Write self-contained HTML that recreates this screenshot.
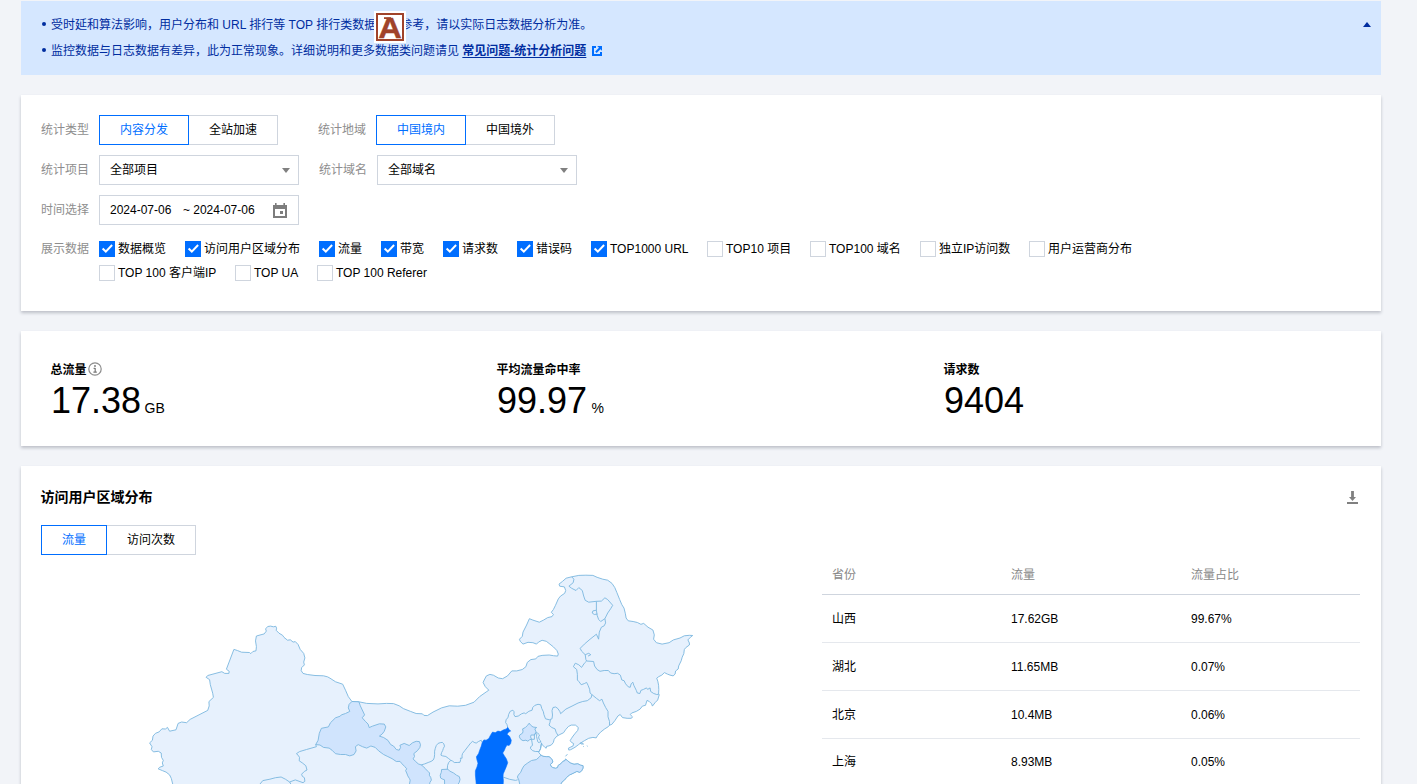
<!DOCTYPE html>
<html lang="zh-CN">
<head>
<meta charset="utf-8">
<title>统计分析</title>
<style>
*{box-sizing:border-box;margin:0;padding:0}
html,body{width:1417px;height:784px;overflow:hidden}
body{background:#f2f4f8;font-family:"Liberation Sans","Noto Sans CJK SC",sans-serif;font-size:12px;color:#000;position:relative;line-height:18px}
.abs{position:absolute}
.alert{left:21px;top:1px;width:1360px;height:74px;background:#d5e7ff;color:#002da0}
.alert .li{position:absolute;left:30px;white-space:nowrap;height:18px;line-height:18px}
.alert .dot{position:absolute;left:20.8px;width:4.4px;height:4.4px;border-radius:50%;background:#002da0}
.alert a{color:#002da0;font-weight:bold;text-decoration:underline;text-decoration-thickness:1px;text-underline-offset:2px}
.card{left:21px;width:1360px;background:#fff;box-shadow:0 2px 3px 0 rgba(54,58,80,.28)}
.lbl{color:#8e8e8e;white-space:nowrap;height:18px;line-height:18px}
.seg{height:30px;line-height:28px;text-align:center;border:1px solid #cfd5de;background:#fff;color:#000;white-space:nowrap}
.seg.on{border-color:#006eff;color:#006eff;z-index:2}
.sel{height:30px;border:1px solid #cfd5de;background:#fff;line-height:28px;padding-left:10px;white-space:nowrap}
.sel .car{position:absolute;right:8px;top:12px;width:0;height:0;border-left:4px solid transparent;border-right:4px solid transparent;border-top:5px solid #808080}
.cb{width:16px;height:16px;border:1px solid #cfd5de;background:#fff}
.cb.on{border-color:#006eff;background:#006eff}
.cb.on svg{position:absolute;left:-1px;top:-1px}
.ct{white-space:nowrap;height:18px;line-height:18px}
.st-t{font-weight:bold;white-space:nowrap;height:18px;line-height:18px}
.st-n{font-size:36px;line-height:44px;height:44px;white-space:nowrap;color:#000}
.st-n small{font-size:14px;margin-left:3.5px}
.th{color:#888;white-space:nowrap;height:18px;line-height:18px}
.td{white-space:nowrap;height:18px;line-height:18px}
.hr{left:822px;width:538px;height:1px;background:#e5e8ed}
</style>
</head>
<body>

<!-- alert -->
<div class="abs alert">
  <span class="dot" style="top:20.8px"></span>
  <div class="li" style="top:15px">受时延和算法影响，用户分布和 URL 排行等 TOP 排行类数据仅供参考，请以实际日志数据分析为准。</div>
  <span class="dot" style="top:46.8px"></span>
  <div class="li" style="top:41px">监控数据与日志数据有差异，此为正常现象。详细说明和更多数据类问题请见 <a>常见问题-统计分析问题</a></div>
  <svg class="abs" style="left:571px;top:45px" width="10" height="10" viewBox="0 0 10 10"><path d="M0 0h4v2H2v6h6V6h2v4H0z" fill="#006eff"/><path d="M5.2 0H10v4.8L8.4 3.2 4.6 7 3.2 5.6 7 1.8z" fill="#006eff"/></svg>
  <span class="abs" style="left:1342px;top:21px;width:0;height:0;border-left:4px solid transparent;border-right:4px solid transparent;border-bottom:5px solid #002da0"></span>
</div>
<!-- IME badge -->
<svg class="abs" style="left:374px;top:11px;z-index:5" width="32" height="32" viewBox="0 0 32 32"><rect width="32" height="32" fill="#fff"/><rect x="3" y="3" width="26" height="26" fill="none" stroke="#a0432a" stroke-width="2"/><rect x="10" y="6.2" width="7" height="1.8" fill="#a0432a"/><g transform="translate(16,0) scale(1.08,1)"><text x="0" y="27" text-anchor="middle" font-family="Liberation Sans, sans-serif" font-weight="bold" font-size="30.2" fill="#a0432a" stroke="#a0432a" stroke-width="0.4">A</text></g></svg>

<!-- filter card -->
<div class="abs card" style="top:95px;height:216px"></div>
<div class="abs lbl" style="left:41px;top:121px">统计类型</div>
<div class="abs seg on" style="left:99px;top:115px;width:90px">内容分发</div>
<div class="abs seg" style="left:188px;top:115px;width:90px">全站加速</div>
<div class="abs lbl" style="left:318px;top:121px">统计地域</div>
<div class="abs seg on" style="left:376px;top:115px;width:90px">中国境内</div>
<div class="abs seg" style="left:465px;top:115px;width:90px">中国境外</div>

<div class="abs lbl" style="left:41px;top:161px">统计项目</div>
<div class="abs sel" style="left:99px;top:155px;width:200px">全部项目<span class="car"></span></div>
<div class="abs lbl" style="left:319px;top:161px">统计域名</div>
<div class="abs sel" style="left:377px;top:155px;width:200px">全部域名<span class="car"></span></div>

<div class="abs lbl" style="left:41px;top:201px">时间选择</div>
<div class="abs sel" style="left:99px;top:195px;width:200px">2024-07-06<span style="margin-left:11.5px">~ 2024-07-06</span>
  <svg class="abs" style="left:173px;top:7px" width="14" height="15" viewBox="0 0 14 15"><path d="M0 2h14v13H0z" fill="#7d7d7d"/><path d="M2 6h10v7H2z" fill="#fff"/><path d="M2 0h1.6v2H2zM10.4 0H12v2h-1.6z" fill="#7d7d7d"/><rect x="7" y="8" width="3" height="3" fill="#7d7d7d"/></svg>
</div>

<div class="abs lbl" style="left:41px;top:240px">展示数据</div>

<div class="abs cb on" style="left:99px;top:241px"><svg width="16" height="16" viewBox="0 0 16 16"><path d="M3.6 7.6l3.2 3 6.3-6.6" fill="none" stroke="#fff" stroke-width="2"/></svg></div><div class="abs ct" style="left:118px;top:240px">数据概览</div>
<div class="abs cb on" style="left:185px;top:241px"><svg width="16" height="16" viewBox="0 0 16 16"><path d="M3.6 7.6l3.2 3 6.3-6.6" fill="none" stroke="#fff" stroke-width="2"/></svg></div><div class="abs ct" style="left:204px;top:240px">访问用户区域分布</div>
<div class="abs cb on" style="left:319px;top:241px"><svg width="16" height="16" viewBox="0 0 16 16"><path d="M3.6 7.6l3.2 3 6.3-6.6" fill="none" stroke="#fff" stroke-width="2"/></svg></div><div class="abs ct" style="left:338px;top:240px">流量</div>
<div class="abs cb on" style="left:381px;top:241px"><svg width="16" height="16" viewBox="0 0 16 16"><path d="M3.6 7.6l3.2 3 6.3-6.6" fill="none" stroke="#fff" stroke-width="2"/></svg></div><div class="abs ct" style="left:400px;top:240px">带宽</div>
<div class="abs cb on" style="left:443px;top:241px"><svg width="16" height="16" viewBox="0 0 16 16"><path d="M3.6 7.6l3.2 3 6.3-6.6" fill="none" stroke="#fff" stroke-width="2"/></svg></div><div class="abs ct" style="left:462px;top:240px">请求数</div>
<div class="abs cb on" style="left:517px;top:241px"><svg width="16" height="16" viewBox="0 0 16 16"><path d="M3.6 7.6l3.2 3 6.3-6.6" fill="none" stroke="#fff" stroke-width="2"/></svg></div><div class="abs ct" style="left:536px;top:240px">错误码</div>
<div class="abs cb on" style="left:591px;top:241px"><svg width="16" height="16" viewBox="0 0 16 16"><path d="M3.6 7.6l3.2 3 6.3-6.6" fill="none" stroke="#fff" stroke-width="2"/></svg></div><div class="abs ct" style="left:610px;top:240px">TOP1000 URL</div>
<div class="abs cb" style="left:707px;top:241px"></div><div class="abs ct" style="left:726px;top:240px">TOP10 项目</div>
<div class="abs cb" style="left:810px;top:241px"></div><div class="abs ct" style="left:829px;top:240px">TOP100 域名</div>
<div class="abs cb" style="left:920px;top:241px"></div><div class="abs ct" style="left:939px;top:240px">独立IP访问数</div>
<div class="abs cb" style="left:1029px;top:241px"></div><div class="abs ct" style="left:1048px;top:240px">用户运营商分布</div>
<div class="abs cb" style="left:99px;top:265px"></div><div class="abs ct" style="left:118px;top:264px">TOP 100 客户端IP</div>
<div class="abs cb" style="left:235px;top:265px"></div><div class="abs ct" style="left:254px;top:264px">TOP UA</div>
<div class="abs cb" style="left:317px;top:265px"></div><div class="abs ct" style="left:336px;top:264px">TOP 100 Referer</div>

<!-- stats card -->
<div class="abs card" style="top:331px;height:115px"></div>
<div class="abs st-t" style="left:50.5px;top:360.5px">总流量</div>
<svg class="abs" style="left:88px;top:362px" width="14" height="14" viewBox="0 0 14 14"><circle cx="7" cy="7" r="6.2" fill="none" stroke="#8c8c8c" stroke-width="1.2"/><path d="M7.2 6v4.2M5.6 6.4H7.2M5.4 10.2h3.4" stroke="#777" stroke-width="1.2" fill="none"/><circle cx="7" cy="4" r=".9" fill="#777"/></svg>
<div class="abs st-n" style="left:51px;top:378.7px">17.38<small>GB</small></div>
<div class="abs st-t" style="left:496.5px;top:360.5px">平均流量命中率</div>
<div class="abs st-n" style="left:497px;top:378.7px">99.97<small style="margin-left:4.5px">%</small></div>
<div class="abs st-t" style="left:943.5px;top:360.5px">请求数</div>
<div class="abs st-n" style="left:944px;top:378.7px">9404</div>

<!-- chart card -->
<div class="abs card" style="top:466px;height:340px"></div>
<div class="abs" style="left:40.5px;top:486.5px;font-size:14px;font-weight:bold;line-height:20px;white-space:nowrap">访问用户区域分布</div>
<svg class="abs" style="left:1347px;top:491px" width="11" height="13" viewBox="0 0 11 13"><path d="M4.1 0h2.8v6.1H9L5.5 10 2 6.1h2.1z" fill="#808080"/><rect x="0" y="11" width="11" height="2" fill="#808080"/></svg>
<div class="abs seg on" style="left:41px;top:525px;width:66px">流量</div>
<div class="abs seg" style="left:106px;top:525px;width:90px">访问次数</div>

<!-- map -->
<svg class="abs" style="left:0;top:560px" width="800" height="224" viewBox="0 560 800 224" fill="none" stroke="#7ab7df" stroke-width="0.9" stroke-linejoin="round">
<path fill="#e7f1fd" d="M173.3 786.9L172.7 784.0L171.3 778.4L169.6 774.9L166.1 772.1L162.6 770.7L158.1 768.8L159.8 767.2L163.3 766.0L162.3 762.9L163.3 760.4L161.5 757.3L161.2 753.0L158.3 751.3L153.4 751.9L151.3 749.5L152.0 746.7L149.6 742.9L152.4 740.3L153.0 736.1L155.5 733.3L159.1 731.9L161.9 728.8L165.4 729.0L167.5 727.4L169.6 731.2L176.0 729.8L178.1 723.4L181.6 722.0L186.6 722.7L190.1 719.4L207.7 710.4L209.2 705.9L208.9 701.6L213.4 697.4L212.7 693.2L210.3 684.7L209.6 679.7L206.1 677.3L207.7 675.5L221.9 671.7L224.7 673.4L228.9 673.4L229.2 671.3L226.4 669.2L233.9 649.4L237.4 650.5L241.6 652.2L249.4 652.5L250.8 653.6L252.9 651.5L256.0 650.8L256.4 646.6L255.5 640.9L256.4 636.0L260.0 635.0L264.2 633.9L266.3 631.1L265.6 628.9L267.7 626.5L270.6 626.1L273.4 626.8L275.8 626.3L276.6 628.2L276.2 630.3L279.0 633.2L282.6 635.3L284.0 637.4L287.5 640.2L290.3 639.8L293.1 642.1L295.3 641.6L298.1 644.5L300.2 649.4L303.7 653.4L304.9 657.9L303.7 662.1L304.4 664.9L301.6 667.7L301.2 670.6L303.0 673.4L307.3 674.5L315.0 675.5L323.5 675.8L327.7 676.9L330.0 678.2L335.6 681.8L342.7 684.2L345.5 690.2L348.3 696.6L351.9 701.5L358.9 701.8L366.7 703.4L378.0 703.9L386.5 703.4L393.5 703.6L399.2 705.8L403.4 708.6L410.5 711.4L416.1 713.5L422.4 713.8L423.9 715.4L427.4 715.6L433.0 712.1L441.5 707.9L449.3 705.8L457.7 706.2L465.5 705.3L474.0 702.2L479.6 696.6L486.7 691.6L488.8 690.2L485.3 686.7L483.1 682.5L484.2 680.0L486.4 675.9L489.9 674.4L493.4 675.2L498.3 678.0L502.6 678.7L507.5 675.9L511.8 670.9L516.7 670.9L522.3 669.5L525.9 666.7L527.3 662.4L530.8 659.6L535.8 658.9L537.9 656.4L542.1 655.4L549.2 655.0L553.4 655.7L557.6 656.1L558.3 654.0L556.9 650.5L553.4 646.9L549.9 644.1L546.3 641.3L542.1 640.3L538.6 642.0L536.5 644.1L532.9 642.7L528.0 642.3L523.0 644.1L520.2 641.3L519.5 639.2L522.3 636.3L523.0 632.1L526.6 625.0L529.4 618.7L532.9 620.1L539.3 622.2L543.5 620.1L547.7 617.6L552.0 616.6L553.4 614.5L551.3 612.3L553.4 609.5L555.5 605.3L558.3 598.9L560.5 596.1L564.7 593.3L565.7 590.5L564.4 586.9L559.7 586.2L559.0 584.1L562.6 581.3L566.1 578.2L571.7 576.8L578.8 575.4L585.9 575.2L592.9 575.4L597.1 577.3L602.8 579.2L607.7 580.2L612.0 583.4L614.8 587.6L616.9 592.6L619.7 599.6L621.8 604.6L624.0 608.1L625.4 613.8L626.1 618.0L628.2 620.8L633.1 621.5L637.4 622.5L640.9 624.3L643.7 623.4L648.0 627.2L652.9 630.0L654.3 634.9L653.6 639.2L656.4 642.7L662.1 644.1L669.1 642.7L673.4 639.9L680.0 638.0L684.3 635.8L689.4 635.3L692.7 635.5L690.4 637.3L687.9 639.9L689.4 643.0L689.4 645.0L685.8 647.6L684.3 649.6L683.8 653.7L682.2 657.2L681.2 660.8L678.7 665.9L678.2 669.0L675.6 671.0L675.1 674.1L673.1 675.9L670.0 675.1L667.4 674.1L664.4 672.6L661.8 675.1L658.8 676.6L656.7 678.2L657.8 681.2L658.6 685.3L658.8 689.4L658.6 694.3L659.3 694.6L657.7 700.0L655.4 702.3L652.4 706.1L651.6 703.8L649.3 701.5L647.0 700.4L645.5 705.3L642.4 706.1L640.1 709.1L636.3 711.4L631.7 713.0L630.2 714.5L632.5 716.8L631.4 718.3L627.1 718.3L622.5 717.6L620.2 714.5L617.9 716.0L614.9 720.6L611.8 724.4L609.5 725.2L608.5 726.5L604.7 728.9L600.5 732.2L597.6 735.5L596.2 737.9L592.9 737.4L588.7 738.3L584.4 740.7L580.6 743.0L578.7 744.5L575.0 747.3L570.7 749.7L568.8 750.1L568.4 748.2L570.2 747.3L573.1 745.9L573.6 743.5L571.7 742.6L570.2 740.7L571.2 738.8L573.1 736.0L575.4 733.1L577.8 730.3L578.3 727.5L575.4 725.1L571.2 725.1L568.4 726.5L565.5 729.8L563.6 732.7L559.9 734.5L558.0 735.5L556.1 736.9L554.2 739.3L553.3 742.6L551.4 744.9L549.0 745.9L546.6 746.3L546.2 748.2L544.8 747.3L542.4 744.9L541.5 743.2L541.0 745.9L540.5 748.7L539.6 750.6L538.6 752.0L539.1 753.0L541.0 755.1L542.9 756.3L546.6 756.7L549.0 756.7L551.4 758.6L552.8 761.0L552.3 762.9L550.4 764.3L550.9 766.2L552.8 767.6L555.6 768.3L557.5 767.6L558.4 765.2L560.8 763.8L562.7 761.5L565.1 760.5L565.5 759.1L567.4 760.5L570.2 762.9L574.0 764.3L577.8 763.8L580.6 765.2L583.0 765.7L583.0 768.1L581.6 770.9L579.7 772.3L576.9 771.4L573.1 773.3L569.3 775.1L566.5 777.5L564.6 779.9L562.2 781.8L560.8 784.0L560.3 788.4Z"/>
<path fill="#d0e4fd" d="M351.9 701.5L358.9 701.8L360.3 705.8L364.6 714.9L362.2 717.8L365.3 721.3L368.1 724.1L369.2 727.6L372.3 726.2L379.4 723.8L384.3 724.1L385.8 726.9L384.3 731.2L382.2 734.0L379.4 736.1L383.6 737.5L387.9 740.3L390.7 744.6L393.5 746.0L396.3 749.5L399.2 750.2L400.6 747.4L399.9 745.3L404.2 743.4L409.2 745.5L412.7 742.7L416.2 741.3L419.4 741.6L420.5 744.8L419.8 747.6L417.3 750.8L413.8 753.6L414.5 756.5L413.1 758.9L415.2 761.1L418.3 763.9L421.2 764.9L423.6 766.7L425.4 768.8L428.2 771.6L429.6 773.0L429.3 775.2L430.7 777.3L431.4 780.1L430.0 782.2L429.6 784.0L429.5 800.6L409.2 800.6L409.5 784.0L410.2 780.1L409.5 778.7L407.8 775.9L406.7 773.0L405.6 770.6L406.7 768.8L404.9 766.7L402.1 763.9L400.0 761.4L396.3 761.5L392.1 758.7L387.9 756.6L383.6 754.5L378.7 750.9L375.2 747.4L370.9 746.0L366.7 748.1L362.5 746.7L358.2 744.6L355.4 746.7L356.1 750.9L354.0 754.5L349.8 755.9L345.5 754.5L340.6 754.5L335.5 753.7L332.0 750.2L329.1 748.1L323.5 747.4L320.0 745.0L315.7 744.6L318.1 740.3L319.3 733.3L321.4 728.3L328.4 726.9L330.5 722.7L335.5 717.8L340.2 716.2L341.3 714.9L345.5 713.5L349.8 711.4L348.3 707.9L349.1 704.3Z"/>
<path fill="#d0e4fd" d="M441.6 769.5L448.0 769.2L449.4 770.9L453.6 773.0L456.5 775.2L459.3 776.6L460.0 779.4L459.3 782.2L458.2 784.0L457.9 800.6L444.6 800.6L444.6 784.0L444.5 779.8L442.3 779.0L440.6 778.0L440.2 775.2L441.3 772.3Z"/>
<path fill="#d0e4fd" d="M541.0 755.1L542.9 756.3L546.6 756.7L549.0 756.7L551.4 758.6L552.8 761.0L552.3 762.9L550.4 764.3L550.9 766.2L552.8 767.6L555.6 768.3L557.5 767.6L558.4 765.2L560.8 763.8L562.7 761.5L565.1 760.5L565.5 759.1L567.4 760.5L570.2 762.9L574.0 764.3L577.8 763.8L580.6 765.2L583.0 765.7L583.0 768.1L581.6 770.9L579.7 772.3L576.9 771.4L573.1 773.3L569.3 775.1L566.5 777.5L564.6 779.9L562.2 781.8L560.8 784.0L560.3 788.4L519.7 788.4L519.7 784.0L518.8 779.9L517.4 777.0L518.3 775.1L520.7 772.3L522.1 769.0L524.0 765.7L527.8 762.9L531.5 760.5L536.3 759.6L539.1 757.2Z"/>
<path fill="#d0e4fd" d="M529.2 723.2L530.6 725.1L533.0 727.0L536.7 727.5L534.8 728.9L535.8 731.2L535.8 732.7L534.4 735.0L531.1 735.0L530.6 736.9L531.5 739.3L529.7 739.7L527.8 741.2L525.9 740.2L523.0 740.7L520.7 739.3L519.3 736.9L519.7 735.0L522.6 733.1L523.0 731.2L522.6 728.9L525.4 727.5L527.3 725.6Z"/>
<path d="M536.7 732.2L538.1 733.6L539.6 735.0L538.6 736.9L539.1 739.3L540.5 740.7L540.8 742.6L541.5 743.2L541.0 745.9L540.5 748.7L539.1 751.5L535.3 751.5L532.5 750.6L530.6 748.7L530.6 746.8L532.5 745.4L532.0 742.1L531.5 739.3L534.4 739.3L534.4 735.0L535.8 732.7Z"/>
<path d="M315.7 744.6L316.4 746.7L306.5 749.5L299.5 751.6L296.4 753.7L298.1 755.2L299.5 757.3L299.2 760.8L302.3 762.9L305.8 765.7L307.0 770.0L304.4 771.4L301.6 774.2L302.3 776.3L304.4 777.7L304.9 781.3L303.0 782.7L295.3 779.9L289.6 782.0L285.4 779.2L281.1 777.0L275.5 777.7L269.9 779.2L262.8 780.6L260.0 784.0L259.3 786.9 M289.6 782.0L292.2 786.2 M450.8 760.3L448.7 758.6L445.9 756.5L442.3 755.8L440.9 755.1L441.6 752.6L442.7 750.5L443.4 748.3L444.5 746.2L443.8 743.8L442.3 742.4L440.2 742.7L438.1 743.4L436.3 745.5L435.3 748.3L434.6 751.2L434.6 754.7L434.2 757.9L433.2 760.0L431.1 761.4L428.2 762.5L424.7 763.9L421.2 764.9 M450.8 760.3L448.7 762.5L447.6 765.3L447.3 769.2 M450.8 760.3L452.6 761.1L454.3 762.5L457.2 762.5L460.0 762.3L460.7 759.6L460.3 758.2L462.1 758.2L462.0 755.8L462.5 753.6L464.9 750.5L467.7 746.9L470.6 743.1L472.7 741.3L474.1 742.4L476.2 743.1L478.3 741.6L481.2 740.2L481.9 742.0 M507.7 727.3L507.0 724.6L505.6 722.5L506.2 719.3L508.0 717.7L508.6 714.5L510.2 711.3L512.9 710.2L514.1 711.8L513.9 714.5L515.0 716.6L518.2 716.1L521.4 713.9L524.1 712.9L525.7 713.7L528.9 711.3L532.1 710.2L532.7 707.5L534.8 705.4L538.0 704.3L540.7 704.8L541.8 708.6L543.4 711.8L543.9 714.5L545.5 718.8L549.3 719.8L552.0 718.8L552.5 715.0L552.0 710.7L553.0 707.5L555.7 707.0L557.9 708.6L560.0 711.8L560.6 713.7L565.9 709.1L572.0 706.1L578.1 703.0L582.7 701.5L587.3 700.7L591.2 697.7L591.9 694.6 M550.4 719.8L550.0 722.3L549.0 725.1L551.8 727.5L555.1 728.9L556.1 732.2L558.0 735.5 M586.6 661.0L584.4 663.2L581.6 667.4L578.8 664.8L575.3 663.2L573.4 666.7L576.7 669.5L577.4 674.4L577.4 680.0L578.9 681.6L581.2 684.7L584.3 683.6L586.6 682.4L588.1 685.4L589.6 689.2L590.1 693.1L591.9 694.6 M591.9 694.6L596.5 698.4L599.6 700.7L601.9 699.2L603.4 703.0L605.7 707.6L608.0 711.4L608.0 716.8L609.5 721.4L609.5 725.2 M586.6 661.0L593.6 661.5L594.6 666.0L597.1 669.5L600.0 671.3L604.2 670.5L608.4 670.5L610.6 673.0L614.1 673.7L617.6 673.3L620.4 675.2L621.8 680.0L624.1 680.7L625.6 683.8L628.2 686.8L630.2 687.3L631.2 683.8L632.8 682.2L633.8 685.3L636.3 690.4L637.3 693.0L639.9 693.5L640.9 690.4L643.5 689.4L646.5 687.9L647.6 689.4L650.1 687.9L650.6 691.4L653.7 693.5L656.7 694.5L658.6 694.3 M571.7 576.8L573.9 579.2L573.2 582.7L568.9 586.2L571.7 588.3L576.0 590.5L578.8 587.6L582.3 590.5L583.7 596.1L585.2 600.3L588.7 602.2L596.4 601.3L601.4 601.1L604.9 597.8L607.7 599.6L612.7 605.3L610.6 608.8L607.7 613.0L604.9 618.7L605.6 622.9L604.2 625.8L601.4 627.2L599.3 632.1L598.6 639.2L596.4 634.2L590.1 639.2L584.4 644.1L580.2 648.3L581.6 651.2L585.2 654.7L585.9 659.6L586.6 661.0 M596.4 601.3L596.4 610.2L597.1 615.2L598.6 619.4L600.7 621.5L604.9 618.7 M596.4 610.2L592.9 610.9L592.2 613.0L594.3 614.5L597.4 614.0 M585.2 654.7L588.7 653.3L590.8 654.7L588.0 656.1 M536.9 733.1L536.5 736.4L537.2 739.3L537.8 741.8L539.1 742.8L540.5 741.2 M565.5 756.3L567.4 754.2 M580.2 743.0L582.1 743.0L583.5 744.0L581.1 744.0L580.2 743.0 M586.8 745.7L587.7 746.3 M583.0 746.3L583.7 746.6 M503.2 777.1L509.6 779.3L515.5 780.4L517.7 779.8"/>
<path fill="#006eff" stroke="#006eff" stroke-width="0.6" d="M507.7 727.3L509.1 729.5L510.7 731.1L508.6 732.1L507.0 734.3L509.6 736.4L511.3 740.2L510.7 743.4L509.1 745.5L507.0 745.0L505.4 747.7L504.3 750.4L502.7 753.0L504.3 755.7L506.4 758.9L507.7 762.7L506.4 766.4L504.8 770.2L503.2 773.9L503.0 777.1L503.4 780.4L503.2 784.0L503.2 796.4L476.2 796.4L476.2 784.0L475.9 780.4L475.4 775.0L475.4 770.7L477.0 767.0L478.0 763.2L477.0 760.0L476.4 756.8L478.6 753.6L479.6 750.4L481.3 746.1L482.3 742.3L483.9 739.9L486.1 740.2L488.8 738.6L490.4 735.4L492.5 732.1L495.2 732.7L497.9 731.1L500.5 731.6L503.2 730.0L506.4 728.9Z"/>
</svg>
<!-- /map -->

<!-- table -->
<div class="abs th" style="left:832px;top:566px">省份</div>
<div class="abs th" style="left:1011px;top:566px">流量</div>
<div class="abs th" style="left:1191px;top:566px">流量占比</div>
<div class="abs hr" style="top:594px;background:#cfd5de"></div>
<div class="abs td" style="left:832px;top:610px">山西</div><div class="abs td" style="left:1011px;top:610px">17.62GB</div><div class="abs td" style="left:1191px;top:610px">99.67%</div>
<div class="abs hr" style="top:642px"></div>
<div class="abs td" style="left:832px;top:658px">湖北</div><div class="abs td" style="left:1011px;top:658px">11.65MB</div><div class="abs td" style="left:1191px;top:658px">0.07%</div>
<div class="abs hr" style="top:690px"></div>
<div class="abs td" style="left:832px;top:706px">北京</div><div class="abs td" style="left:1011px;top:706px">10.4MB</div><div class="abs td" style="left:1191px;top:706px">0.06%</div>
<div class="abs hr" style="top:738px"></div>
<div class="abs td" style="left:832px;top:753px">上海</div><div class="abs td" style="left:1011px;top:753px">8.93MB</div><div class="abs td" style="left:1191px;top:753px">0.05%</div>

</body>
</html>
